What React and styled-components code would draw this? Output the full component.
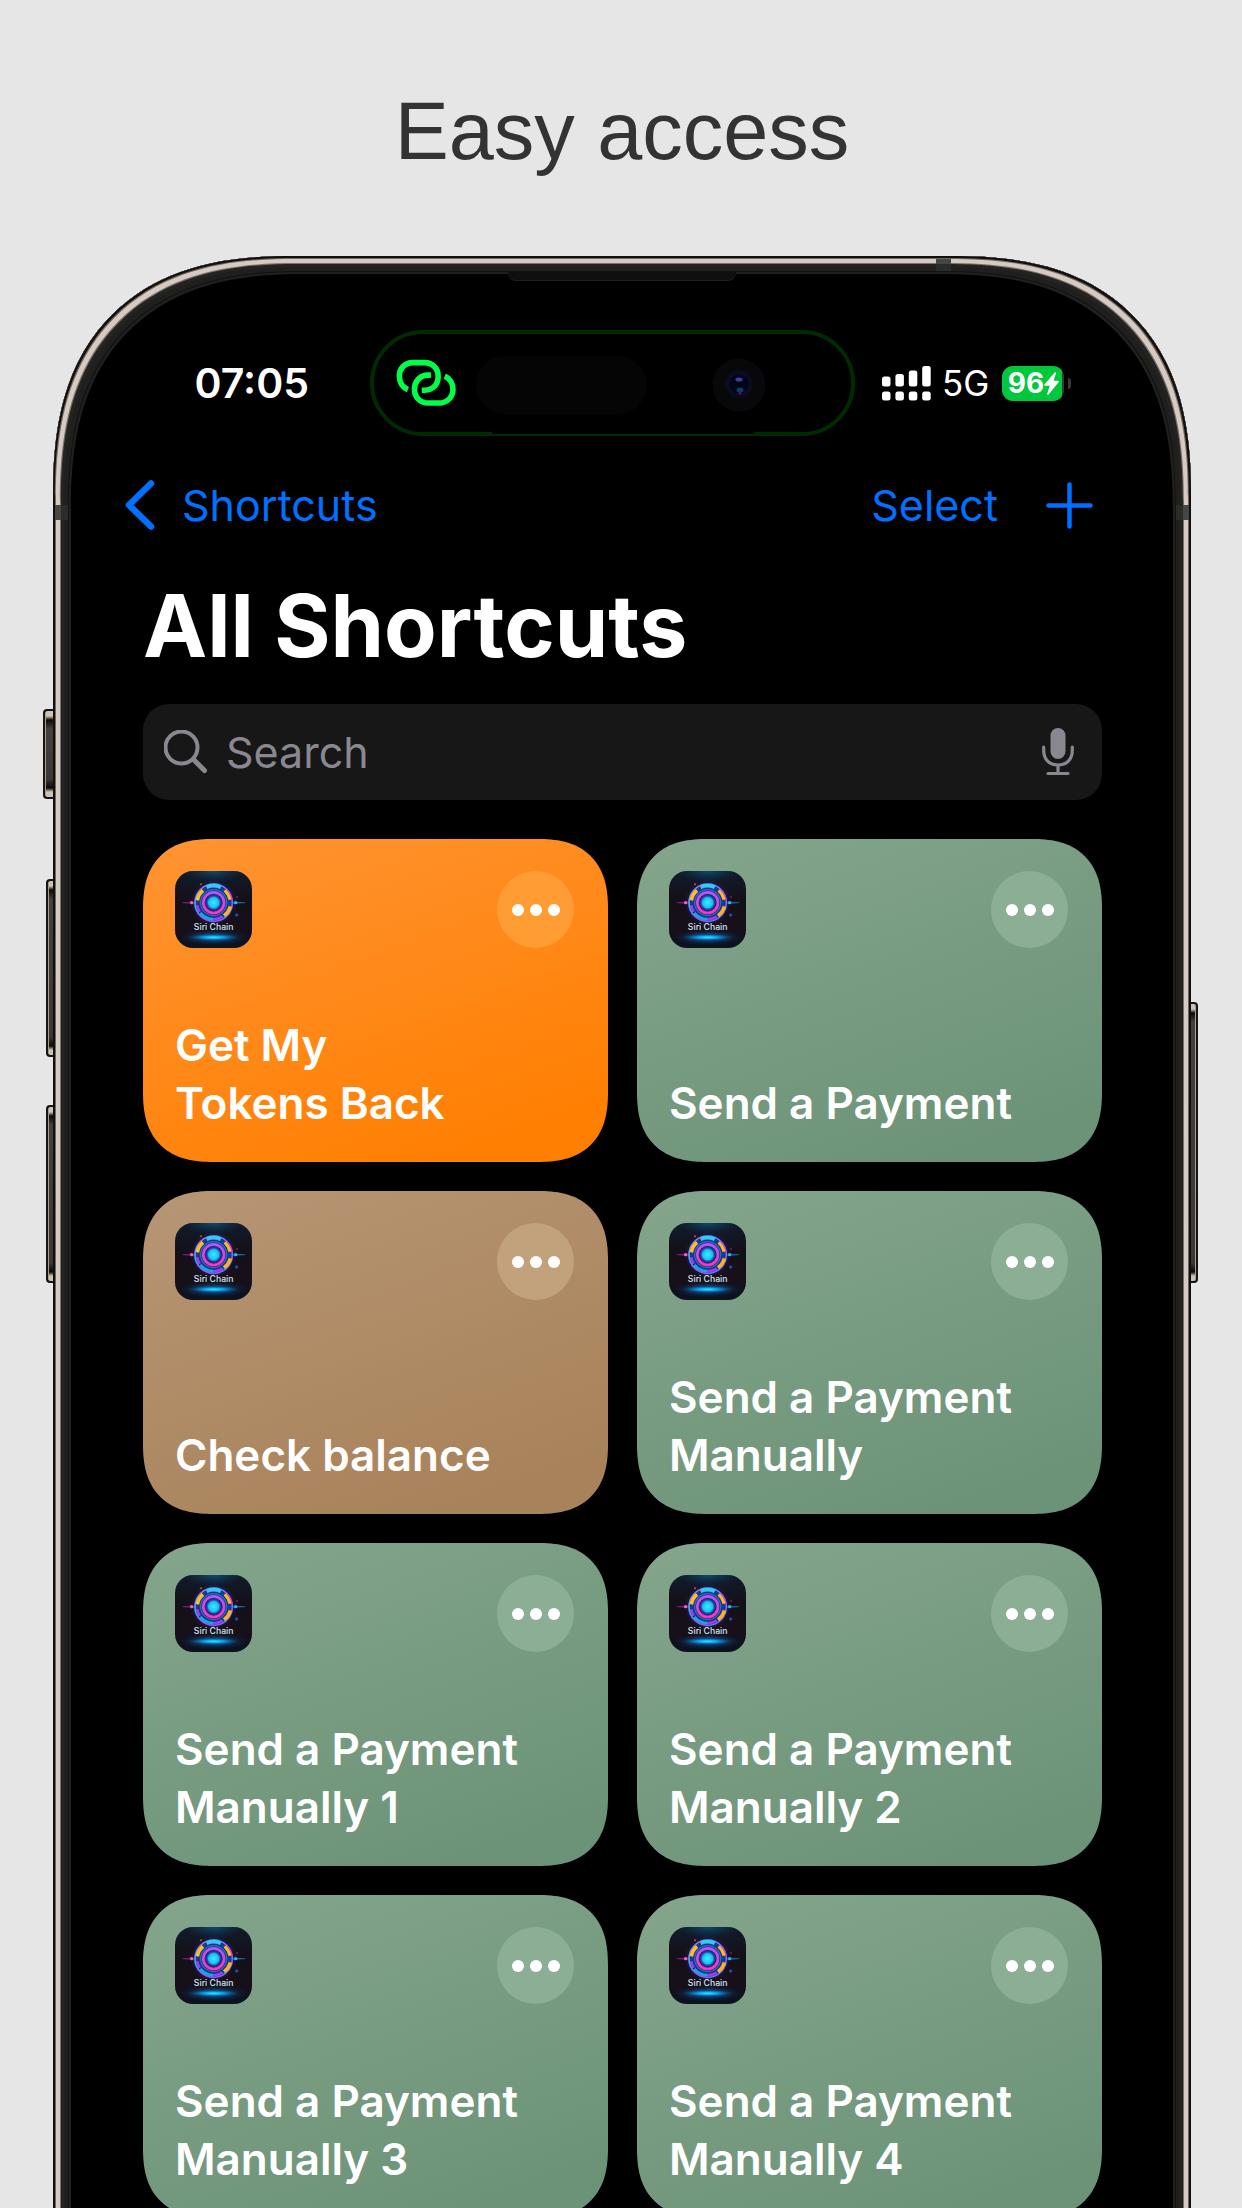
import React, { useId } from "react";
import styled, { createGlobalStyle } from "styled-components";

const GlobalStyle = createGlobalStyle`
  * { box-sizing: border-box; }
  body {
    margin: 0;
    background: #e6e6e6;
    font-family: Inter, Roboto, "Liberation Sans", sans-serif;
  }
  button { font: inherit; border: 0; padding: 0; background: none; cursor: pointer; }
  svg { display: block; flex: none; }
`;

const Page = styled.main`
  display: flex;
  flex-direction: column;
  height: 100vh;
  overflow: hidden;
  padding: 83px 51px 0 53px;
`;

const Headline = styled.h1`
  flex: none;
  margin: 0 0 77px;
  font: 400 81px/96px "Liberation Sans", Arial, sans-serif;
  color: #333333;
  text-align: center;
`;

const Phone = styled.section`
  position: relative;
  flex: none;
  padding: 74px 0 80px;
  border-radius: 200px 200px 0 0;
  background: #000;
  box-shadow:
    inset 0 0 0 2px #12100f,
    inset 0 0 0 3px #70685f,
    inset 0 0 0 7px #d6cbc3,
    inset 0 0 0 8px #77706a,
    inset 0 0 0 11px #242321,
    inset 0 0 0 15px #1f1f1d,
    inset 0 0 0 16px #131313,
    inset 0 0 0 18px #202020;

  @supports (corner-shape: superellipse(1.3)) {
    border-radius: 240px 240px 0 0;
    corner-shape: superellipse(1.3);
  }
`;

const SideKey = styled.span`
  position: absolute;
  top: ${(p) => p.$top}px;
  ${(p) => p.$side}: -${(p) => p.$depth}px;
  width: ${(p) => p.$depth}px;
  height: ${(p) => p.$length}px;
  border: 2px solid #171412;
  border-${(p) => (p.$side === "left" ? "right" : "left")}-width: 0;
  border-radius: ${(p) => (p.$side === "left" ? "4px 0 0 4px" : "0 4px 4px 0")};
  background: linear-gradient(#cfc3b8 0 5px, #0b0908 9px, #45403c 18px, #3b3734 calc(100% - 18px), #0b0908 calc(100% - 9px), #cfc3b8 calc(100% - 5px));
  box-shadow: inset ${(p) => (p.$side === "left" ? "1px" : "-1px")} 0 0 #a89c90;
`;

const Band = styled.span`
  position: absolute;
  top: 249px;
  ${(p) => p.$side}: 2px;
  width: 13px;
  height: 15px;
  background: linear-gradient(to ${(p) => (p.$side === "left" ? "right" : "left")}, #464644 6px, #2b2b29 6px);
`;

const TopBand = styled.span`
  position: absolute;
  top: 3px;
  right: 240px;
  width: 15px;
  height: 12px;
  background: linear-gradient(#464644 5px, #2b2b29 5px);
`;

const Earpiece = styled.span`
  position: absolute;
  top: 16px;
  left: 50%;
  width: 228px;
  height: 9px;
  margin-left: -114px;
  border-radius: 0 0 8px 8px;
  background: #0f0f0f;
  border-bottom: 1px solid #202020;
`;

const StatusBar = styled.div`
  display: grid;
  grid-template-columns: 317px 485px 1fr;
  align-items: center;
  height: 106px;
  color: #fff;
`;

const Time = styled.time`
  padding-right: 61px;
  text-align: right;
  font-size: 41px;
  font-weight: 600;
  line-height: 52px;
`;

const Island = styled.div`
  position: relative;
  display: flex;
  align-items: center;
  justify-content: space-between;
  height: 106px;
  padding: 0 85px 0 21px;
  border: 4px solid #002b00;
  border-radius: 54px;

  &::after {
    content: "";
    position: absolute;
    left: 118px;
    right: 96px;
    bottom: -2px;
    height: 3px;
    border-radius: 2px;
    background: #000;
  }
`;

const Sensor = styled.span`
  width: 171px;
  height: 58px;
  margin-top: 4px;
  border-radius: 29px;
  background: #050505;
`;

const CameraHole = styled.span`
  margin-top: 4px;
`;

const IslandIcons = styled.span`
  display: flex;
  align-items: center;
  gap: 19px;
`;

const Radio = styled.div`
  display: flex;
  align-items: center;
  padding-left: 27px;
`;

const Network = styled.span`
  margin-left: 11px;
  font-size: 35px;
  line-height: 44px;
`;

const Battery = styled.span`
  display: flex;
  align-items: center;
  justify-content: center;
  width: 62px;
  height: 35px;
  margin-left: 13px;
  border-radius: 11px;
  background: linear-gradient(90deg, #00c73b 60px, #3a3a3a 60px);
  font-size: 28px;
  font-weight: 700;
  line-height: 35px;
`;

const Nub = styled.span`
  width: 3px;
  height: 11px;
  margin-left: 4px;
  border-radius: 0 6px 6px 0;
  background: #3a3a3a;
`;

const NavBar = styled.nav`
  display: flex;
  align-items: center;
  justify-content: space-between;
  height: 56px;
  margin: 41px 98px 41px 72px;
`;

const NavButton = styled.button`
  display: flex;
  align-items: center;
  gap: 26px;
  color: #0070ff;
  font-size: 43px;
  line-height: 56px;
`;

const NavGroup = styled.div`
  display: flex;
  align-items: center;
  gap: 48px;
`;

const Content = styled.div`
  padding: 0 89px 0 90px;
`;

const Title = styled.h2`
  margin: 0 0 26px;
  color: #fff;
  font-size: 86px;
  font-weight: 700;
  line-height: 104px;
`;

const SearchBox = styled.label`
  display: flex;
  align-items: center;
  height: 96px;
  margin-bottom: 39px;
  padding: 0 28px 0 21px;
  border-radius: 26px;
  background: #171717;
  color: #8a8791;
`;

const SearchInput = styled.input`
  flex: 1;
  min-width: 0;
  margin-left: 18px;
  padding: 0;
  border: 0;
  outline: 0;
  background: none;
  color: #fff;
  font: 400 43px/56px Inter, Roboto, sans-serif;
  &::placeholder { color: #8a8791; opacity: 1; }
`;

const MicButton = styled.button`
  color: inherit;
`;

const Grid = styled.div`
  display: grid;
  grid-template-columns: 1fr 1fr;
  gap: 29px;
`;

const tones = {
  orange: { from: "#ff9433", to: "#ff7f02", dot: "#ff9c33" },
  green: { from: "#84a58c", to: "#6c9378", dot: "#8bae94" },
  brown: { from: "#b79674", to: "#a8825a", dot: "#c2a17d" },
};

const Card = styled.article`
  display: flex;
  flex-direction: column;
  justify-content: space-between;
  height: 323px;
  padding: 32px 34px 30px 32px;
  border-radius: 58px;
  background: linear-gradient(160deg, ${(p) => tones[p.$tone].from}, ${(p) => tones[p.$tone].to} 88%);

  @supports (corner-shape: superellipse(1.3)) {
    border-radius: 70px;
    corner-shape: superellipse(1.3);
  }
`;

const CardTop = styled.div`
  display: flex;
  justify-content: space-between;
`;

const MoreButton = styled.button`
  display: flex;
  align-items: center;
  justify-content: center;
  gap: 6px;
  width: 77px;
  height: 77px;
  border-radius: 50%;
  background: ${(p) => tones[p.$tone].dot};
`;

const Dot = styled.span`
  width: 12px;
  height: 12px;
  border-radius: 50%;
  background: #fff;
`;

const CardName = styled.h3`
  margin: 0;
  color: #fff;
  font-size: 44px;
  font-weight: 600;
  line-height: 58px;
  white-space: pre-line;
`;

function LinkIcon() {
  return (
    <svg width="62" height="48" viewBox="105 115 186 146" fill="none" stroke="#00ff46" strokeWidth="17" aria-hidden="true">
      <path d="M143 208C126 201 117 186 117 166C117 144 133 126 158 126H194C218 126 235 144 235 168C235 193 218 210 194 210H185" />
      <path d="M213 164H204C180 164 163 183 163 207C163 231 180 249 204 249H238C262 249 280 231 280 207C280 190 271 174 255 167" />
    </svg>
  );
}

function Camera() {
  return (
    <svg width="54" height="54" viewBox="0 0 54 54" aria-hidden="true">
      <circle cx="27" cy="27" r="26.5" fill="#08070a" />
      <circle cx="27" cy="26" r="14" fill="#0b0d15" />
      <circle cx="27" cy="26" r="10.5" fill="#04041a" stroke="#0b0b34" strokeWidth="1.5" />
      <ellipse cx="27" cy="21.5" rx="3.5" ry="2" fill="#3f3f9e" />
      <ellipse cx="28" cy="32" rx="3.5" ry="2.5" fill="#123d5c" />
      <circle cx="28" cy="35" r="1.5" fill="#4a1480" />
    </svg>
  );
}

function Signal() {
  const tops = [10.5, 8, 4.5, 0];
  return (
    <svg width="49" height="35" viewBox="0 0 49 35" fill="#fff" aria-hidden="true">
      {tops.map((top, i) => (
        <g key={top}>
          <rect x={i * 13.4} y={top} width="8.5" height={20.5 - top} rx="2.5" />
          <rect x={i * 13.4} y="25.5" width="8.5" height="9" rx="2.5" />
        </g>
      ))}
    </svg>
  );
}

function Bolt() {
  return (
    <svg width="15" height="23" viewBox="0 0 15 23" fill="#fff" aria-hidden="true">
      <path d="M10.5 0.8C11.5 -0.1 12.3 0.4 11.9 1.6L9.6 8.8H14C15 8.8 15.2 9.6 14.6 10.3L4.7 22.2C3.7 23.2 2.9 22.6 3.3 21.4L5.7 13.8H1.2C0.2 13.8 0 13 0.6 12.3Z" />
    </svg>
  );
}

function AppIcon() {
  const id = useId();
  const url = (name) => `url(#${id}${name})`;
  return (
    <svg width="77" height="77" viewBox="0 0 231 231" role="img" aria-label="Siri Chain">
      <defs>
        <linearGradient id={`${id}bg`} x1="0" y1="0" x2="0" y2="1">
          <stop offset="0" stopColor="#101c2a" />
          <stop offset="0.4" stopColor="#150f18" />
          <stop offset="0.75" stopColor="#17101a" />
          <stop offset="1" stopColor="#0b1220" />
        </linearGradient>
        <radialGradient id={`${id}top`}>
          <stop offset="0" stopColor="#0e5684" stopOpacity="0.8" />
          <stop offset="1" stopColor="#0e3a5c" stopOpacity="0" />
        </radialGradient>
        <radialGradient id={`${id}glow`}>
          <stop offset="0.6" stopColor="#3a2aa8" stopOpacity="0.7" />
          <stop offset="1" stopColor="#2a1a70" stopOpacity="0" />
        </radialGradient>
        <radialGradient id={`${id}floor`}>
          <stop offset="0" stopColor="#36e4ff" />
          <stop offset="0.4" stopColor="#0a9cf0" />
          <stop offset="1" stopColor="#053a78" stopOpacity="0" />
        </radialGradient>
        <radialGradient id={`${id}core`}>
          <stop offset="0" stopColor="#3df0ff" />
          <stop offset="0.65" stopColor="#12bdf5" />
          <stop offset="1" stopColor="#0b4fae" stopOpacity="0" />
        </radialGradient>
        <linearGradient id={`${id}ring`} x1="0" y1="0" x2="1" y2="1">
          <stop offset="0" stopColor="#f04ca8" />
          <stop offset="0.3" stopColor="#28b9ff" />
          <stop offset="0.6" stopColor="#c83bf0" />
          <stop offset="1" stopColor="#1c9ff0" />
        </linearGradient>
        <linearGradient id={`${id}pink`} x1="0" y1="0" x2="0" y2="1">
          <stop offset="0" stopColor="#b355ff" />
          <stop offset="1" stopColor="#ff35c0" />
        </linearGradient>
        <clipPath id={`${id}clip`}>
          <rect width="231" height="231" rx="54" />
        </clipPath>
      </defs>
      <g clipPath={url("clip")}>
        <rect width="231" height="231" fill={url("bg")} />
        <ellipse cx="116" cy="0" rx="90" ry="34" fill={url("top")} />
        <ellipse cx="116" cy="199" rx="104" ry="24" fill={url("floor")} opacity="0.35" />
        <ellipse cx="116" cy="199" rx="78" ry="11" fill={url("floor")} />
        <circle cx="116" cy="95" r="72" fill={url("glow")} />
        <ellipse cx="50" cy="95" rx="28" ry="3" fill="#a02fc4" opacity="0.6" />
        <ellipse cx="184" cy="95" rx="28" ry="3" fill="#0d86c8" opacity="0.7" />
        <g fill="none">
          <circle cx="116" cy="95" r="56" stroke={url("ring")} strokeWidth="5" />
          <circle cx="116" cy="95" r="48" stroke="#163c94" strokeWidth="9" />
          <path d="M95 49A50 50 0 0 1 137 49" stroke="#35c8ff" strokeWidth="11" />
          <path d="M76 126A50 50 0 0 0 116 145" stroke="#18a4e0" strokeWidth="9" />
          <path d="M116 145A50 50 0 0 0 143 137" stroke="#9a3cf0" strokeWidth="8" />
          <path d="M67 88A50 50 0 0 1 84 58" stroke="#ffbe32" strokeWidth="11" />
          <path d="M149 58A50 50 0 0 1 165 86" stroke="#ffb42a" strokeWidth="9" />
          <path d="M166 106A50 50 0 0 1 147 134" stroke="#ffb028" strokeWidth="11" />
          <path d="M66 103A50 50 0 0 0 74 122" stroke="#9340f4" strokeWidth="8" />
          <circle cx="116" cy="95" r="39" stroke="#137cb4" strokeWidth="4" />
          <circle cx="116" cy="95" r="31" stroke={url("pink")} strokeWidth="8" />
        </g>
        <circle cx="116" cy="95" r="24" fill={url("core")} />
        <circle cx="50" cy="95" r="5" fill="#ff5bbd" />
        <circle cx="182" cy="95" r="5" fill="#29b6f6" />
        <circle cx="78" cy="40" r="3" fill="#c4502c" />
        <circle cx="185" cy="132" r="5" fill="#234ba0" />
        <circle cx="186" cy="78" r="3" fill="#7a2160" />
        <text x="116" y="177" textAnchor="middle" fill="#d3e6ee" fontFamily="Inter, sans-serif" fontSize="26" fontWeight="500">
          Siri Chain
        </text>
      </g>
    </svg>
  );
}

const shortcuts = [
  { name: "Get My\nTokens Back", tone: "orange" },
  { name: "Send a Payment", tone: "green" },
  { name: "Check balance", tone: "brown" },
  { name: "Send a Payment\nManually", tone: "green" },
  { name: "Send a Payment\nManually 1", tone: "green" },
  { name: "Send a Payment\nManually 2", tone: "green" },
  { name: "Send a Payment\nManually 3", tone: "green" },
  { name: "Send a Payment\nManually 4", tone: "green" },
];

function ShortcutCard({ name, tone }) {
  return (
    <Card $tone={tone}>
      <CardTop>
        <AppIcon />
        <MoreButton $tone={tone} type="button" aria-label={`Edit ${name}`}>
          <Dot />
          <Dot />
          <Dot />
        </MoreButton>
      </CardTop>
      <CardName>{name}</CardName>
    </Card>
  );
}

export default function App() {
  return (
    <>
      <GlobalStyle />
      <Page>
        <Headline>Easy access</Headline>
        <Phone>
          <SideKey $side="left" $top={453} $length={90} $depth={10} />
          <SideKey $side="left" $top={623} $length={178} $depth={7} />
          <SideKey $side="left" $top={849} $length={178} $depth={7} />
          <SideKey $side="right" $top={746} $length={281} $depth={7} />
          <Band $side="left" />
          <Band $side="right" />
          <TopBand />
          <Earpiece />

          <StatusBar>
            <Time>07:05</Time>
            <Island>
              <IslandIcons>
                <LinkIcon />
                <Sensor />
              </IslandIcons>
              <CameraHole>
                <Camera />
              </CameraHole>
            </Island>
            <Radio>
              <Signal />
              <Network>5G</Network>
              <Battery>
                96
                <Bolt />
              </Battery>
              <Nub />
            </Radio>
          </StatusBar>

          <NavBar>
            <NavButton type="button">
              <svg width="31" height="52" viewBox="0 0 31 52" fill="none" stroke="currentColor" strokeWidth="6.5" strokeLinecap="round" strokeLinejoin="round" aria-hidden="true">
                <path d="M26 4.500L4 26L26 47.500" />
              </svg>
              Shortcuts
            </NavButton>
            <NavGroup>
              <NavButton type="button">Select</NavButton>
              <NavButton type="button" aria-label="New shortcut">
                <svg width="47" height="47" viewBox="0 0 47 47" fill="none" stroke="currentColor" strokeWidth="4.5" strokeLinecap="round" aria-hidden="true">
                  <path d="M23.500 2.500V44.500M2.500 23.500H44.500" />
                </svg>
              </NavButton>
            </NavGroup>
          </NavBar>

          <Content>
            <Title>All Shortcuts</Title>
            <SearchBox>
              <svg width="44" height="44" viewBox="0 0 44 44" fill="none" stroke="currentColor" strokeLinecap="round" aria-hidden="true">
                <circle cx="17.5" cy="17.5" r="16" strokeWidth="4" />
                <path d="M29.500 29.500L40.500 40.500" strokeWidth="5" />
              </svg>
              <SearchInput type="text" placeholder="Search" aria-label="Search" />
              <MicButton type="button" aria-label="Dictate">
                <svg width="32" height="48" viewBox="0 0 32 48" fill="none" stroke="currentColor" strokeWidth="3.2" strokeLinecap="round" aria-hidden="true">
                  <rect x="8.5" y="0" width="15" height="31" rx="7.5" fill="currentColor" stroke="none" />
                  <path d="M1.700 19V22.500C1.700 31.500 7.500 37 16 37C24.500 37 30.300 31.500 30.300 22.500V19M16 37V45.500M6 45.500H26" />
                </svg>
              </MicButton>
            </SearchBox>
            <Grid>
              {shortcuts.map((s) => (
                <ShortcutCard key={s.name} {...s} />
              ))}
            </Grid>
          </Content>
        </Phone>
      </Page>
    </>
  );
}
